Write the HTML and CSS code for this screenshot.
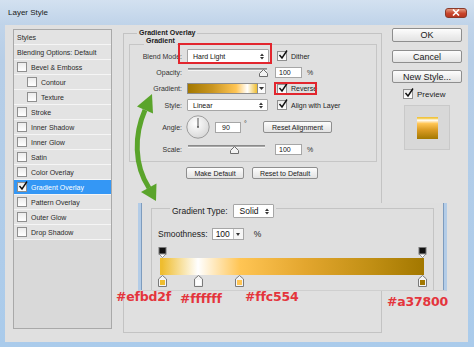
FILE: index.html
```html
<!DOCTYPE html>
<html>
<head>
<meta charset="utf-8">
<title>Layer Style</title>
<link rel="stylesheet" href="styles.css">
</head>
<body>
<div class="window">
  <div class="titlebar">
    <span class="title">Layer Style</span>
    <span class="close"><svg width="8" height="7" viewBox="0 0 8 7"><path d="M1 0.5 L7 6.5 M7 0.5 L1 6.5" stroke="#fff" stroke-width="1.6"/></svg></span>
  </div>
  <div class="body">
    <div class="styles">
      <div class="row">Styles</div>
      <div class="row">Blending Options: Default</div>
      <div class="row"><span class="cb"></span>Bevel &amp; Emboss</div>
      <div class="row sub"><span class="cb"></span>Contour</div>
      <div class="row sub"><span class="cb"></span>Texture</div>
      <div class="row"><span class="cb"></span>Stroke</div>
      <div class="row"><span class="cb"></span>Inner Shadow</div>
      <div class="row"><span class="cb"></span>Inner Glow</div>
      <div class="row"><span class="cb"></span>Satin</div>
      <div class="row"><span class="cb"></span>Color Overlay</div>
      <div class="row sel"><span class="cb"><svg class="tick" width="10" height="10" viewBox="0 0 10 10"><path d="M1.5 5 L4 8 L9 0.5" fill="none" stroke="#111" stroke-width="1.4"/></svg></span>Gradient Overlay</div>
      <div class="row"><span class="cb"></span>Pattern Overlay</div>
      <div class="row"><span class="cb"></span>Outer Glow</div>
      <div class="row"><span class="cb"></span>Drop Shadow</div>
    </div>

    <fieldset class="outer">
      <legend>Gradient Overlay</legend>
      <fieldset class="inner">
        <legend>Gradient</legend>
        <div class="rows">
          <div class="frow h16">
            <label>Blend Mode:</label>
            <span class="select w82">Hard Light<svg class="ud" width="4" height="7" viewBox="0 0 4 7"><path d="M0 3 L2 0.5 L4 3 Z M0 4 L2 6.5 L4 4 Z" fill="#333"/></svg></span>
            <span class="chk m8"><span class="cb"><svg class="tick" width="10" height="10" viewBox="0 0 10 10"><path d="M1.5 5 L4 8 L9 0.5" fill="none" stroke="#111" stroke-width="1.4"/></svg></span>Dither</span>
          </div>
          <div class="frow h16">
            <label>Opacity:</label>
            <span class="slider w79"><span class="track"></span><svg class="thumb" style="left:71px" width="9" height="8" viewBox="0 0 9 8"><path d="M4.5 0.5 L8.5 4.5 L8.5 7.5 L0.5 7.5 L0.5 4.5 Z" fill="#f3f3f3" stroke="#6d6d6d"/></svg></span>
            <span class="num m8">100</span><span class="pct">%</span>
          </div>
          <div class="frow h17">
            <label>Gradient:</label>
            <span class="swatch"></span><span class="swbtn"><svg width="5" height="3" viewBox="0 0 5 3"><path d="M0 0 L5 0 L2.5 3 Z" fill="#333"/></svg></span>
            <span class="chk m11"><span class="cb"><svg class="tick" width="10" height="10" viewBox="0 0 10 10"><path d="M1.5 5 L4 8 L9 0.5" fill="none" stroke="#111" stroke-width="1.4"/></svg></span>Reverse</span>
          </div>
          <div class="frow h16">
            <label>Style:</label>
            <span class="select w81">Linear<svg class="ud" width="4" height="7" viewBox="0 0 4 7"><path d="M0 3 L2 0.5 L4 3 Z M0 4 L2 6.5 L4 4 Z" fill="#333"/></svg></span>
            <span class="chk m9"><span class="cb"><svg class="tick" width="10" height="10" viewBox="0 0 10 10"><path d="M1.5 5 L4 8 L9 0.5" fill="none" stroke="#111" stroke-width="1.4"/></svg></span>Align with Layer</span>
          </div>
          <div class="frow h28">
            <label>Angle:</label>
            <svg class="dial" width="24" height="24" viewBox="0 0 24 24">
              <defs><radialGradient id="dg" cx="0.4" cy="0.35" r="0.7"><stop offset="0" stop-color="#ffffff"/><stop offset="1" stop-color="#d6d6d6"/></radialGradient></defs>
              <circle cx="12" cy="12" r="11.2" fill="url(#dg)" stroke="#8c8c8c" stroke-width="0.8"/>
              <path d="M12 12 L12 3" stroke="#555" stroke-width="1"/>
              <circle cx="12" cy="12" r="0.9" fill="#555"/>
            </svg>
            <span class="num w26">90</span><span class="deg">°</span>
            <span class="btn small w69">Reset Alignment</span>
          </div>
          <div class="frow h16">
            <label>Scale:</label>
            <span class="slider w77"><span class="track"></span><svg class="thumb" style="left:42px" width="9" height="8" viewBox="0 0 9 8"><path d="M4.5 0.5 L8.5 4.5 L8.5 7.5 L0.5 7.5 L0.5 4.5 Z" fill="#f3f3f3" stroke="#6d6d6d"/></svg></span>
            <span class="num m10">100</span><span class="pct">%</span>
          </div>
        </div>
      </fieldset>
      <div class="defaults">
        <span class="btn small w58">Make Default</span>
        <span class="btn small w66">Reset to Default</span>
      </div>
    </fieldset>

    <div class="side">
      <span class="btn big h14">OK</span>
      <span class="btn big m8t">Cancel</span>
      <span class="btn big m7t">New Style...</span>
      <span class="preview-chk"><span class="cb"><svg class="tick" width="10" height="10" viewBox="0 0 10 10"><path d="M1.5 5 L4 8 L9 0.5" fill="none" stroke="#111" stroke-width="1.4"/></svg></span>Preview</span>
      <div class="preview"><div class="pswatch"></div></div>
    </div>
  </div>

  <div class="ge">
    <fieldset class="gt">
      <legend><span>Gradient Type:</span><span class="select solid">Solid<svg class="ud" width="4" height="7" viewBox="0 0 4 7"><path d="M0 3 L2 0.5 L4 3 Z M0 4 L2 6.5 L4 4 Z" fill="#333"/></svg></span></legend>
      <div class="smooth">
        <span>Smoothness:</span>
        <span class="snum"><span class="sval">100</span><span class="sdd"><svg width="4" height="3" viewBox="0 0 4 3"><path d="M0 0 L4 0 L2 3 Z" fill="#333"/></svg></span></span>
        <span class="spct">%</span>
      </div>
      <div class="gwrap">
        <div class="stops">
          <svg class="ostop" style="left:calc(0.8% - 4.5px)" width="9" height="11" viewBox="0 0 9 11"><rect x="1" y="0.5" width="7" height="6.5" fill="#111" stroke="#777"/><path d="M1 7 L8 7 L4.5 10.5 Z" fill="#fff" stroke="#777" stroke-width="0.8"/></svg>
          <svg class="ostop" style="left:calc(99.6% - 4.5px)" width="9" height="11" viewBox="0 0 9 11"><rect x="1" y="0.5" width="7" height="6.5" fill="#111" stroke="#777"/><path d="M1 7 L8 7 L4.5 10.5 Z" fill="#fff" stroke="#777" stroke-width="0.8"/></svg>
        </div>
        <div class="gbar"></div>
        <div class="stops">
          <svg class="cstop" style="left:calc(0.8% - 4.5px)" width="9" height="12" viewBox="0 0 9 12"><path d="M4.5 0.5 L8.5 4 L8.5 11.5 L0.5 11.5 L0.5 4 Z" fill="#f4f4f4" stroke="#7a7a7a"/><rect x="2" y="5" width="5" height="5" fill="#efbd2f"/></svg>
          <svg class="cstop" style="left:calc(14.4% - 4.5px)" width="9" height="12" viewBox="0 0 9 12"><path d="M4.5 0.5 L8.5 4 L8.5 11.5 L0.5 11.5 L0.5 4 Z" fill="#f4f4f4" stroke="#7a7a7a"/><rect x="2" y="5" width="5" height="5" fill="#ffffff"/></svg>
          <svg class="cstop" style="left:calc(30.3% - 4.5px)" width="9" height="12" viewBox="0 0 9 12"><path d="M4.5 0.5 L8.5 4 L8.5 11.5 L0.5 11.5 L0.5 4 Z" fill="#f4f4f4" stroke="#7a7a7a"/><rect x="2" y="5" width="5" height="5" fill="#ffc554"/></svg>
          <svg class="cstop" style="left:calc(99.6% - 4.5px)" width="9" height="12" viewBox="0 0 9 12"><path d="M4.5 0.5 L8.5 4 L8.5 11.5 L0.5 11.5 L0.5 4 Z" fill="#f4f4f4" stroke="#7a7a7a"/><rect x="2" y="5" width="5" height="5" fill="#a37800"/></svg>
        </div>
      </div>
    </fieldset>
  </div>

  <span class="note n1">#efbd2f</span>
  <span class="note n2">#ffffff</span>
  <span class="note n3">#ffc554</span>
  <span class="note n4">#a37800</span>

  <div class="hl hl1"></div>
  <div class="hl hl2"></div>

  <svg class="arrow" width="474" height="347" viewBox="0 0 474 347">
    <path d="M145 110 C 134 135, 134 165, 149 188" fill="none" stroke="#5aa42b" stroke-width="5"/>
    <path d="M152 94 L137 106.5 L153 113.5 Z" fill="#5aa42b"/>
    <path d="M156 201 L141 192 L156.5 183.5 Z" fill="#5aa42b"/>
  </svg>
</div>
</body>
</html>
```

FILE: styles.css
```css
* { box-sizing: border-box; }
html, body { margin: 0; padding: 0; }
body {
  width: 474px;
  height: 347px;
  overflow: hidden;
  font-family: "Liberation Sans", Arial, sans-serif;
  font-size: 7px;
  color: #222;
}
.window {
  position: relative;
  width: 474px;
  height: 347px;
  display: flex;
  flex-direction: column;
  background: linear-gradient(#c7d8eb, #b7cee7 60px, #aacbeb);
}
.titlebar {
  height: 25px;
  flex: none;
  display: flex;
  align-items: center;
  justify-content: space-between;
  padding: 0 7px 0 8px;
  background: linear-gradient(#d3e1f0, #bfd3e9);
}
.title { font-size: 8px; color: #1b1b1b; }
.close {
  width: 22px;
  height: 10px;
  border-radius: 3px;
  border: 1px solid #8a3a2a;
  background: linear-gradient(#e59a80, #c8452c 55%, #b83620);
  display: flex;
  align-items: center;
  justify-content: center;
}
.body {
  flex: 1;
  margin: 0 6px 5px 5px;
  background: #e0e0e0;
  display: flex;
  align-items: flex-start;
  padding: 4px 6px 0 8px;
}

/* left styles list */
.styles {
  width: 99px;
  height: 300px;
  flex: none;
  border: 1px solid #a9a9a9;
  background: #d9d9d9;
}
.row {
  height: 15px;
  display: flex;
  align-items: center;
  padding-left: 3px;
  background: #e3e3e3;
  border-bottom: 1px solid #f5f5f5;
  color: #2a2a2a;
  white-space: nowrap;
}
.row.sub { padding-left: 13px; }
.row.sel { background: #3497f5; color: #fff; }
.cb {
  width: 10px;
  height: 10px;
  flex: none;
  border: 1px solid #8f8f8f;
  background: linear-gradient(#ececec, #ffffff);
  margin-right: 4px;
  display: flex;
  align-items: center;
  justify-content: center;
  overflow: visible;
}
.tick { flex: none; margin-top: -2px; margin-left: 1px; }

/* middle group */
fieldset { margin: 0; min-width: 0; }
.outer {
  width: 259px;
  height: 304px;
  flex: none;
  margin-left: 11px;
  padding: 0 0 0 5px;
  border: 1px solid #c3c3c3;
}
.outer > legend {
  margin-left: 8px;
  padding: 0 2px;
  line-height: 8px;
  font-weight: bold;
  color: #1a1a1a;
}
.inner {
  width: 248px;
  height: 125px;
  padding: 0;
  border: 1px solid #c6c6c6;
}
.inner > legend {
  margin-left: 14px;
  padding: 0 2px 6px;
  line-height: 8px;
  font-weight: bold;
  color: #1a1a1a;
}
.rows { margin-top: -3px; }
.frow { display: flex; align-items: center; white-space: nowrap; }
.h16 { height: 16px; }
.h17 { height: 17px; }
.h28 { height: 28px; }
.frow > label {
  width: 52px;
  flex: none;
  text-align: right;
  margin-right: 5px;
  color: #333;
}
.select {
  height: 14px;
  flex: none;
  display: flex;
  align-items: center;
  justify-content: space-between;
  padding: 0 4px 0 5px;
  border: 1px solid #a6a6a6;
  border-radius: 1px;
  background: #fff;
  color: #111;
}
.w82 { width: 82px; }
.w81 { width: 81px; height: 12px; }
.chk { display: flex; align-items: center; color: #222; }
.chk .cb { margin-right: 4px; }
.m8 { margin-left: 8px; }
.m9 { margin-left: 9px; }
.m10 { margin-left: 10px; }
.m11 { margin-left: 11px; }
.slider {
  position: relative;
  height: 12px;
  flex: none;
  margin-left: 1px;
  display: flex;
  flex-direction: column;
}
.w79 { width: 79px; }
.w77 { width: 77px; }
.track {
  display: block;
  height: 3px;
  margin-top: 2px;
  background: #a8a8a8;
  border-top: 1px solid #8a8a8a;
  border-bottom: 1px solid #f4f4f4;
}
.thumb { position: absolute; top: 3px; }
.num {
  width: 27px;
  height: 11px;
  flex: none;
  display: flex;
  align-items: center;
  padding-left: 3px;
  border: 1px solid #a6a6a6;
  background: #fff;
  color: #111;
}
.w26 { width: 26px; margin-left: 5px; padding-left: 6px; }
.pct { margin-left: 5px; color: #333; }
.deg { width: 6px; margin-left: 3px; align-self: flex-start; margin-top: 7px; color: #333; }
.swatch {
  width: 71px;
  height: 11px;
  flex: none;
  border: 1px solid #8d8d8d;
  background: linear-gradient(to right, #a37800 0%, #c99520 35%, #ffc554 69.7%, #ffffff 86%, #efbd2f 100%);
}
.swbtn {
  width: 8px;
  height: 11px;
  flex: none;
  border: 1px solid #a6a6a6;
  border-left: none;
  background: #fbfbfb;
  display: flex;
  align-items: center;
  justify-content: center;
}
.dial { flex: none; margin-left: -1px; }
.btn {
  display: flex;
  align-items: center;
  justify-content: center;
  flex: none;
  border: 1px solid #8e8e8e;
  border-radius: 2px;
  background: linear-gradient(#fdfdfd, #eeeeee 55%, #e3e3e3);
  color: #1a1a1a;
  white-space: nowrap;
}
.small { height: 12px; font-size: 7px; }
.w69 { width: 69px; margin-left: 13px; }
.w58 { width: 58px; }
.w66 { width: 66px; }
.defaults {
  display: flex;
  gap: 8px;
  margin-top: 5px;
  padding-left: 57px;
}

/* right column */
.side {
  width: 70px;
  flex: none;
  margin-left: 10px;
  margin-top: -1px;
  display: flex;
  flex-direction: column;
}
.big { height: 13px; font-size: 9px; }
.h14 { height: 14px; }
.m8t { margin-top: 8px; }
.m7t { margin-top: 7px; }
.preview-chk {
  display: flex;
  align-items: center;
  height: 10px;
  margin-top: 6px;
  padding-left: 11px;
  font-size: 8px;
  color: #222;
}
.preview-chk .cb { margin-right: 4px; }
.preview {
  width: 46px;
  height: 45px;
  margin-top: 6px;
  margin-left: 12px;
  border: 1px solid #c9c9c9;
  background: #d8d8d8;
  display: flex;
  align-items: center;
  justify-content: center;
}
.pswatch {
  width: 21px;
  height: 22px;
  background: linear-gradient(to bottom, #efbd2f 0%, #f6d468 8%, #ffffff 14%, #ffc554 30%, #d99a22 60%, #a37800 100%);
}

/* gradient editor overlay */
.ge {
  position: absolute;
  left: 138px;
  top: 203px;
  width: 309px;
  height: 88px;
  overflow: hidden;
  background: #dfdfdf;
  border-left: 3px solid #b3cce7;
  border-right: 3px solid #b3cce7;
  border-bottom: 1px solid #cfcfcf;
  box-shadow: inset 1px 0 0 #7e9cbe, inset -1px 0 0 #7e9cbe;
  padding-left: 10px;
  font-size: 8.5px;
  color: #222;
}
.gt {
  width: 283px;
  height: 130px;
  margin-top: -5px;
  padding: 0 0 0 6px;
  border: 1px solid #c4c4c4;
}
.gt > legend {
  margin-left: 12px;
  padding: 6px 2px 0;
  display: flex;
  align-items: center;
  gap: 5px;
  white-space: nowrap;
}
.solid { width: 41px; padding: 0 4px 0 6px; }
.smooth {
  height: 14px;
  margin-top: 9px;
  display: flex;
  align-items: center;
  white-space: nowrap;
}
.snum {
  width: 32px;
  height: 12px;
  margin-left: 4px;
  display: flex;
  border: 1px solid #a6a6a6;
  background: #fff;
}
.sval { flex: 1; display: flex; align-items: center; padding-left: 3px; color: #111; }
.sdd {
  width: 10px;
  border-left: 1px solid #c4c4c4;
  background: #f6f6f6;
  display: flex;
  align-items: center;
  justify-content: center;
}
.spct { margin-left: 10px; }
.gwrap {
  width: 264px;
  margin-left: 2px;
  margin-top: 5px;
}
.stops { position: relative; height: 12px; }
.ostop { position: absolute; top: 1px; }
.cstop { position: absolute; top: 0; }
.gbar {
  height: 17px;
  background: linear-gradient(to right, #efbd2f 0.8%, #ffffff 14.4%, #ffc554 30.3%, #e3a62e 55%, #c18f14 80%, #a37800 99.6%);
}

/* annotations */
.note {
  position: absolute;
  font-family: "DejaVu Sans", Verdana, sans-serif;
  font-weight: bold;
  font-size: 12.5px;
  line-height: 14px;
  color: #e4353c;
  white-space: nowrap;
  letter-spacing: -0.2px;
}
.n1 { left: 116px; top: 290px; }
.n2 { left: 180px; top: 292px; }
.n3 { left: 245px; top: 290px; }
.n4 { left: 387px; top: 295px; }
.hl {
  position: absolute;
  border: 2px solid #e2262e;
}
.hl1 { left: 178px; top: 43px; width: 94px; height: 21px; }
.hl2 { left: 274px; top: 82px; width: 43px; height: 13px; }
.arrow { position: absolute; left: 0; top: 0; pointer-events: none; }
```
